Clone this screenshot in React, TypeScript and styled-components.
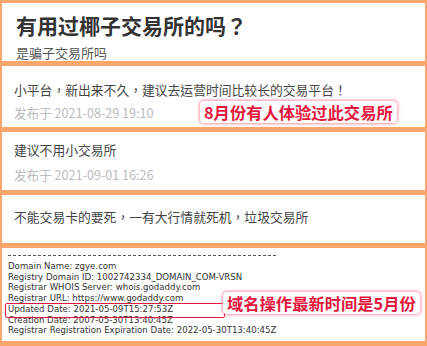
import React from "react";
import styled, { createGlobalStyle } from "styled-components";

const Global = createGlobalStyle`
  html, body { margin: 0; padding: 0; }
  body {
    width: 427px;
    height: 346px;
    overflow: hidden;
    background: #fba66c;
    font-family: "Noto Sans CJK TC", "Noto Sans CJK SC", "Noto Sans", sans-serif;
  }
`;

const Page = styled.div`
  position: relative;
  display: flex;
  flex-direction: column;
  gap: 5px;
  padding: 3px 2px 5px 2px;
  height: 346px;
  box-sizing: border-box;
`;

const Card = styled.div<{ $h: number; $pt: number; $gap: number }>`
  position: relative;
  background: #fff;
  height: ${(p) => p.$h}px;
  box-sizing: border-box;
  padding: ${(p) => p.$pt}px 12px 0 12px;
  display: flex;
  flex-direction: column;
  gap: ${(p) => p.$gap}px;
`;

const Title = styled.div`
  font-size: 21px;
  font-weight: 700;
  color: #333;
  line-height: 26px;
  padding-left: 2px;
`;

const Sub = styled.div`
  font-size: 13px;
  color: #555;
  line-height: 16px;
  padding-left: 2px;
`;

const Body = styled.div`
  font-size: 12.8px;
  color: #444;
  line-height: 18px;
`;

const DateLine = styled.div`
  font-size: 12.6px;
  color: #b9bcc0;
  line-height: 18px;
`;

const Whois = styled.div`
  position: relative;
  background: #fff;
  height: 93px;
  box-sizing: border-box;
  padding: 2px 6px 0 6px;
  font-family: "DejaVu Sans", Verdana, sans-serif;
  font-size: 8.6px;
  color: #333;
  line-height: 10.7px;
`;

const Dashes = styled.div`
  width: 268px;
  border-top: 1px dashed #555;
  margin: 5px 0 5px 0;
`;

const Callout = styled.div<{ $x: number; $y: number }>`
  position: absolute;
  left: ${(p) => p.$x}px;
  top: ${(p) => p.$y}px;
  background: #fff;
  color: #e5173f;
  font-weight: 700;
  font-family: "Noto Sans CJK SC", sans-serif;
  font-size: 16.3px;
  line-height: 22px;
  padding: 0 4px;
  border-radius: 4px;
  box-shadow: 0 0 3px 1px rgba(255, 110, 140, 0.75);
  white-space: nowrap;
`;

const RedBox = styled.div`
  position: absolute;
  left: 3px;
  top: 55px;
  width: 218px;
  height: 13px;
  border: 1.5px solid #e5173f;
  border-radius: 2px;
`;

export default function App() {
  return (
    <>
      <Global />
      <Page>
        <Card $h={58} $pt={9} $gap={7}>
          <Title>有用过椰子交易所的吗？</Title>
          <Sub>是骗子交易所吗</Sub>
        </Card>
        <Card $h={61} $pt={15} $gap={5}>
          <Body>小平台，新出来不久，建议去运营时间比较长的交易平台！</Body>
          <DateLine>发布于 2021-08-29 19:10</DateLine>
          <Callout $x={198} $y={35}>8月份有人体验过此交易所</Callout>
        </Card>
        <Card $h={58} $pt={9} $gap={7}>
          <Body>建议不用小交易所</Body>
          <DateLine>发布于 2021-09-01 16:26</DateLine>
        </Card>
        <Card $h={48} $pt={13} $gap={0}>
          <Body>不能交易卡的要死，一有大行情就死机，垃圾交易所</Body>
        </Card>
        <Whois>
          <Dashes />
          <div>Domain Name: zgye.com</div>
          <div>Registry Domain ID: 1002742334_DOMAIN_COM-VRSN</div>
          <div>Registrar WHOIS Server: whois.godaddy.com</div>
          <div>Registrar URL: https://www.godaddy.com</div>
          <div>Updated Date: 2021-05-09T15:27:53Z</div>
          <div>Creation Date: 2007-05-30T13:40:45Z</div>
          <div>Registrar Registration Expiration Date: 2022-05-30T13:40:45Z</div>
          <RedBox />
          <Callout $x={221} $y={44}>域名操作最新时间是5月份</Callout>
        </Whois>
      </Page>
    </>
  );
}
